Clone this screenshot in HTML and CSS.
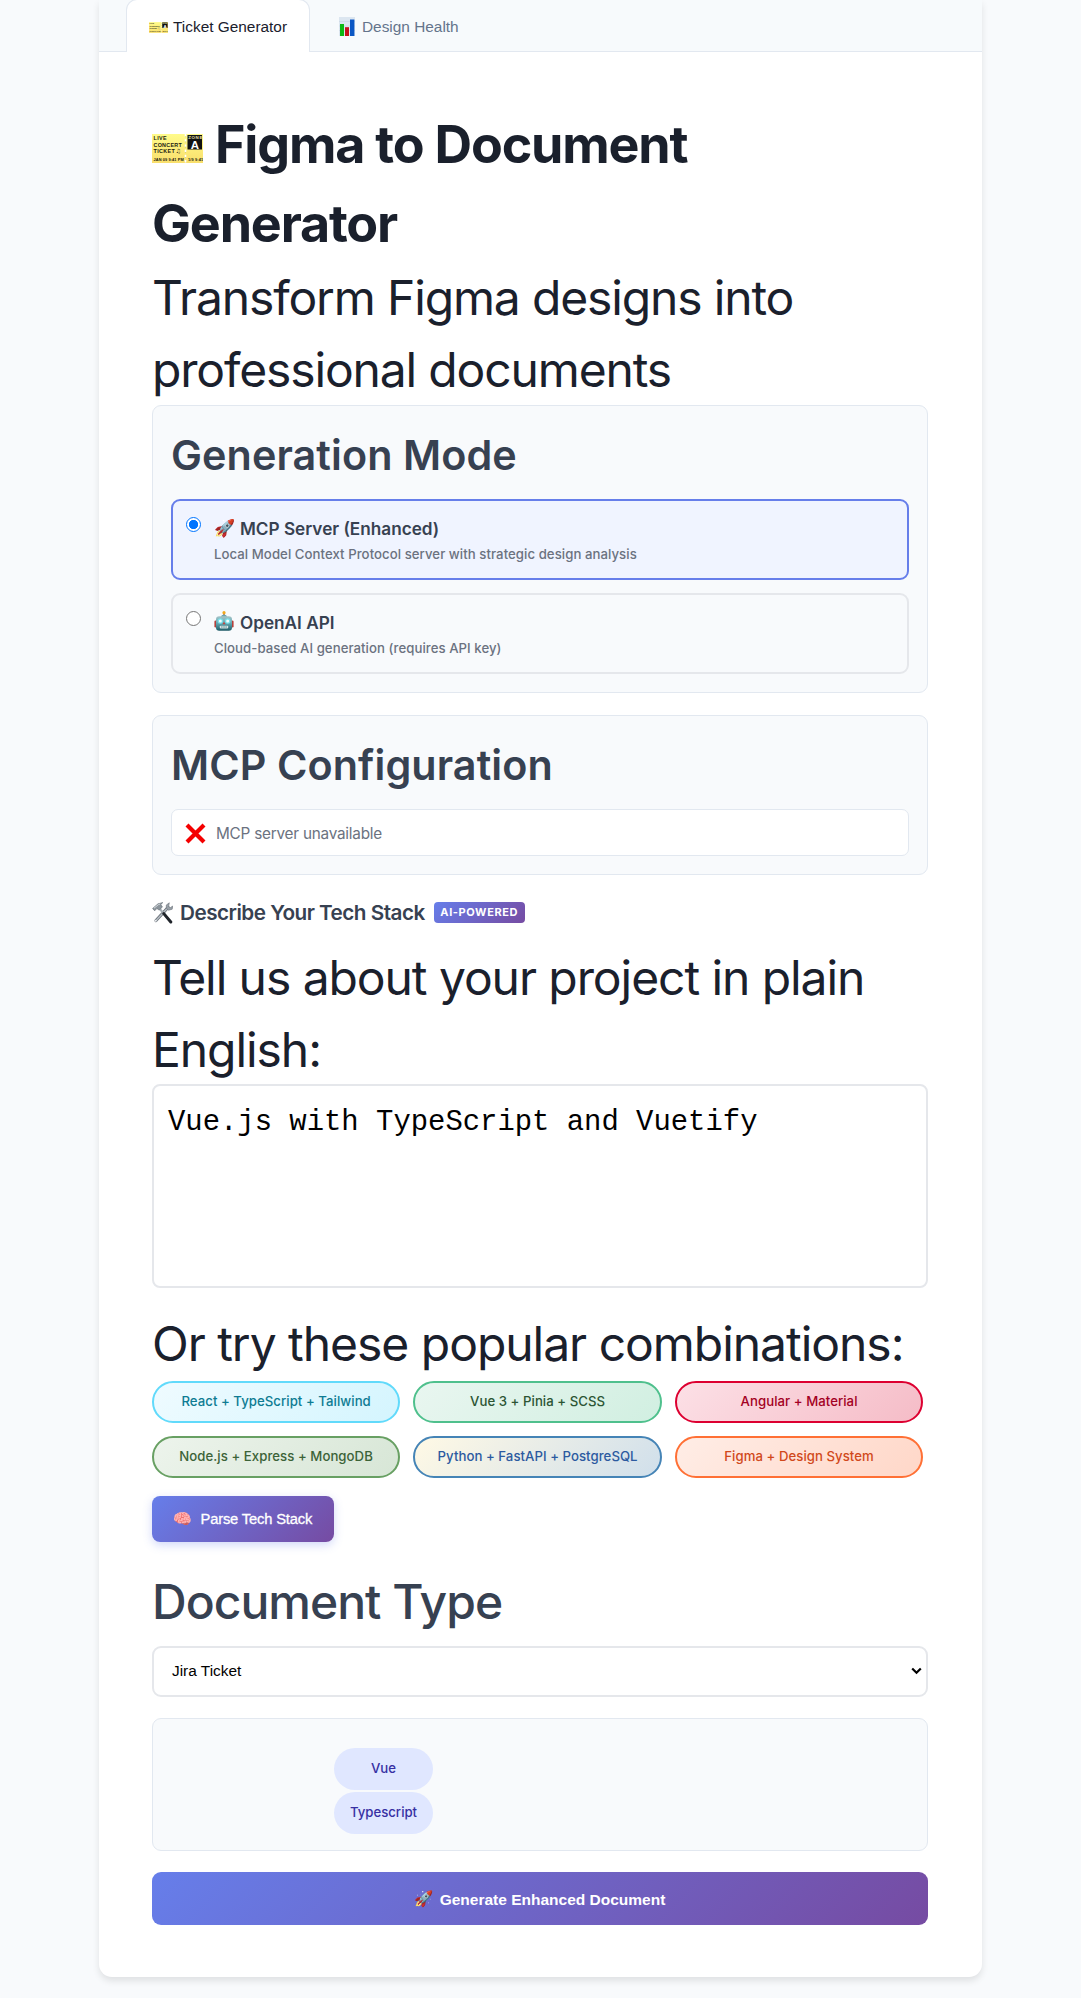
FILE: index.html
```html
<!DOCTYPE html>
<html lang="en">
<head>
<meta charset="utf-8">
<title>Figma to Document Generator</title>
<link rel="stylesheet" href="styles.css">
</head>
<body>
<svg class="defs" width="0" height="0" aria-hidden="true">
  <defs>
    <linearGradient id="paper" x1="0" y1="0" x2="0" y2="1"><stop offset="0" stop-color="#fffb8a"/><stop offset="1" stop-color="#f9df6c"/></linearGradient>
    <linearGradient id="face" x1="0" y1="0" x2="0" y2="1"><stop offset="0" stop-color="#a5c4c8"/><stop offset=".5" stop-color="#5fa6b0"/><stop offset="1" stop-color="#1d5965"/></linearGradient>
    <symbol id="ticket" viewBox="0 0 51 29">
      <rect width="51" height="29" fill="url(#paper)"/>
      <path d="M33.500 0v29" stroke="#fff" stroke-width="1.600" stroke-dasharray="2.400 2.800"/>
      <path d="M33.500 2.400v26" stroke="#b9b38a" stroke-width=".6" stroke-dasharray=".8 4.400"/>
      <rect x="35.500" y="1" width="14.500" height="14.500" fill="#111"/>
      <g font-family="Liberation Sans" font-weight="700" fill="#1b1a10">
        <text x="1.500" y="6" font-size="5.400" textLength="12">LIVE</text>
        <text x="1.500" y="12.600" font-size="5.400" textLength="27">CONCERT</text>
        <text x="1.500" y="19.400" font-size="5.400" textLength="20">TICKET</text>
        <text x="23.500" y="19.400" font-size="6" font-family="DejaVu Sans">♫</text>
        <text x="1.500" y="27" font-size="3.900" textLength="29">JAN 09  9:41 PM</text>
        <text x="36" y="27" font-size="3.900" textLength="14">1/9  9:41</text>
        <text x="36.200" y="5" font-size="4.400" textLength="13" fill="#e9e3b0">ZONE</text>
        <text x="38.800" y="14.600" font-size="11.500" fill="#fff">A</text>
      </g>
    </symbol>
    <symbol id="chart" viewBox="0 0 16 19">
      <rect width="16" height="19" fill="#dce6f0"/>
      <path d="M0 4.500h16M0 9h16M0 13.500h16" stroke="#c3d0de" stroke-width=".5"/>
      <rect x="1" y="7" width="4" height="12" fill="#0db814"/>
      <rect x="6" y="10.200" width="4" height="8.800" fill="#c8101c"/>
      <rect x="11" y="2.500" width="4.400" height="16.500" fill="#0b57c4"/>
    </symbol>
    <symbol id="robot" viewBox="0 0 20 20">
      <rect x=".4" y="9.500" width="2.600" height="7" rx="1.300" fill="#b5413b"/>
      <rect x="17" y="9.500" width="2.600" height="7" rx="1.300" fill="#b5413b"/>
      <path d="M10 2v4" stroke="#c14d32" stroke-width="1.400"/>
      <circle cx="10" cy="1.700" r="1.600" fill="#f1a91e"/>
      <path d="M6.800 6q.4-2.500 3.200-2.500T13.200 6z" fill="#6aa5ae"/>
      <rect x="2" y="5.300" width="16" height="14.500" rx="3.200" fill="url(#face)"/>
      <circle cx="6.300" cy="10" r="2.700" fill="#7be0ea"/><circle cx="13.700" cy="10" r="2.700" fill="#7be0ea"/>
      <circle cx="6.300" cy="10" r="1.500" fill="#f5ffff"/><circle cx="13.700" cy="10" r="1.500" fill="#f5ffff"/>
      <path d="M10 10.800l1.300 2.400H8.700z" fill="#d5382d"/>
      <rect x="5.800" y="14.800" width="8.400" height="2.600" rx=".8" fill="#dbe9e8"/>
      <path d="M7.900 14.800v2.600M10 14.800v2.600M12.100 14.800v2.600" stroke="#32707a" stroke-width=".6"/>
    </symbol>
    <symbol id="cross" viewBox="0 0 21 21">
      <path d="M2 2l17 17M19 2L2 19" stroke="#f40000" stroke-width="4.200"/>
    </symbol>
    <symbol id="tools" viewBox="0 0 21 22">
      <path d="M16 5.500L4 18.500" stroke="#6d747c" stroke-width="3.200" stroke-linecap="round"/>
      <path d="M16.300 5.200L4.300 18.200" stroke="#b7bec4" stroke-width="1.300" stroke-linecap="round"/>
      <path d="M17.300.8L14.300 3v3.300l2.300 1.900 3.600-1 .6-3.200-2.400 1.600-1.800-1z" fill="#98a0a7" stroke="#6d747c" stroke-width=".6"/>
      <circle cx="3.700" cy="18.700" r="1" fill="#e9ecee"/>
      <path d="M7.500 6.500l5 6" stroke="#a5adb3" stroke-width="2"/>
      <path d="M11.800 11.600l7 8.400" stroke="#20242a" stroke-width="3" stroke-linecap="round"/>
      <path d="M.6 6.500L6 1.800 10.800.6l-2 1.900 1.600 2.600-3.300 3-2.200-1.600L2.700 8.800z" fill="#8c959c" stroke="#626a72" stroke-width=".6"/>
      <path d="M2 6.200l4.300-3.500 2-.8" stroke="#d5dade" fill="none"/>
    </symbol>
  </defs>
</svg>

<div class="container">
  <nav class="tabs">
    <button class="tab tab-active"><svg class="tab-ticket"><use href="#ticket"/></svg>Ticket Generator</button>
    <button class="tab"><svg class="tab-chart"><use href="#chart"/></svg>Design Health</button>
  </nav>

  <main class="content">
    <h1 class="title"><svg class="title-ticket"><use href="#ticket"/></svg>Figma to Document<br>Generator</h1>
    <p class="lead">Transform Figma designs into<br>professional documents</p>

    <section class="card mode">
      <h2 class="card-title">Generation Mode</h2>
      <label class="option option-selected">
        <span class="radio radio-on"></span>
        <span class="option-body">
          <span class="option-title"><span class="emoji">🚀</span>MCP Server (Enhanced)</span>
          <span class="option-sub">Local Model Context Protocol server with strategic design analysis</span>
        </span>
      </label>
      <label class="option">
        <span class="radio"></span>
        <span class="option-body">
          <span class="option-title"><svg class="robot"><use href="#robot"/></svg>OpenAI API</span>
          <span class="option-sub">Cloud-based AI generation (requires API key)</span>
        </span>
      </label>
    </section>

    <section class="card config">
      <h2 class="card-title">MCP Configuration</h2>
      <div class="status"><svg class="cross"><use href="#cross"/></svg><span>MCP server unavailable</span></div>
    </section>

    <div class="stack-head">
      <svg class="tools"><use href="#tools"/></svg>
      <h3 class="stack-title">Describe Your Tech Stack</h3>
      <span class="badge">AI-POWERED</span>
    </div>
    <p class="lead prompt">Tell us about your project in plain<br>English:</p>
    <textarea class="stack-input" spellcheck="false">Vue.js with TypeScript and Vuetify</textarea>

    <p class="lead combos-label">Or try these popular combinations:</p>
    <div class="combos">
      <button class="combo react">React + TypeScript + Tailwind</button>
      <button class="combo vue">Vue 3 + Pinia + SCSS</button>
      <button class="combo angular">Angular + Material</button>
      <button class="combo node">Node.js + Express + MongoDB</button>
      <button class="combo python">Python + FastAPI + PostgreSQL</button>
      <button class="combo figma">Figma + Design System</button>
    </div>
    <button class="parse"><span class="emoji brain">🧠</span>Parse Tech Stack</button>

    <h2 class="doc-label">Document Type</h2>
    <div class="select"><span>Jira Ticket</span><svg class="caret" viewBox="0 0 11 8"><path d="M1.200 1.500l4.300 4.300 4.300-4.300" fill="none" stroke="#000" stroke-width="2.200"/></svg></div>

    <div class="card tags">
      <span class="tag">Vue</span>
      <span class="tag">Typescript</span>
    </div>

    <button class="generate"><span class="emoji launch">🚀</span>Generate Enhanced Document</button>
  </main>
</div>
</body>
</html>
```
FILE: styles.css
```css
* { box-sizing: border-box; }

body {
  margin: 0;
  background: #f8fafc;
  color: #1a202c;
  font-family: Inter, sans-serif;
  height: 1998px;
  overflow: hidden;
}

h1, h2, h3, p { margin: 0; white-space: nowrap; }
button { font-family: "Liberation Sans", Arial, sans-serif; border: 0; padding: 0; white-space: nowrap; }
svg { flex: none; }
.defs { position: absolute; }

.container {
  width: 882.5px;
  height: 1977px;
  margin-left: 99px;
  background: #fff;
  border-radius: 0 0 13px 13px;
  box-shadow: 0 4px 7px rgba(0, 0, 0, .1);
}

.tabs {
  display: flex;
  height: 52px;
  padding-left: 27px;
  background: #f7fafc;
  border-bottom: 1px solid #e2e8f0;
}
.tab {
  display: flex;
  align-items: center;
  height: 53px;
  margin-top: -1px;
  padding: 2px 22px 0;
  border: 1px solid transparent;
  background: transparent;
  color: #64748b;
  font-size: 15.4px;
}
.tab-active {
  width: 184px;
  margin-right: 6px;
  background: #fff;
  border-color: #e2e8f0;
  border-bottom: 0;
  border-radius: 11px 11px 0 0;
  color: #1a202c;
}
.tab-ticket { width: 19px; height: 11px; margin-right: 5px; }
.tab-chart { width: 16px; height: 19px; margin: -1px 7px 0 0; }

.content { display: flex; flex-direction: column; padding: 53px 53.5px 0 53px; }

.title { font-size: 52px; font-weight: 700; line-height: 79px; letter-spacing: -1.18px; }
.title-ticket { width: 51px; height: 29px; margin-right: 12px; }
.lead { font-size: 48px; line-height: 71.5px; letter-spacing: -1.15px; }
.title + .lead { margin-top: -1px; }

.card { border: 1px solid #e2e8f0; border-radius: 9px; background: #f8fafc; padding: 19px 18px 0; }
.card-title { font-size: 41.3px; font-weight: 600; line-height: 60px; color: #374151; letter-spacing: .1px; }

.mode { height: 288px; }
.option {
  display: flex;
  height: 81px;
  margin-top: 13px;
  padding: 14px 0 0 13px;
  border: 2px solid #e5e7eb;
  border-radius: 9px;
}
.option-selected { border-color: #667eea; background: #f0f4ff; margin-top: 14px; }
.radio { width: 15px; height: 15px; margin: 2px 13px 0 0; border: 1px solid #767676; border-radius: 50%; background: #fff; }
.radio-on { border: 1.5px solid #0075ff; background: radial-gradient(circle, #0075ff 0 4.3px, #fff 5px); }
.option-body { display: flex; flex-direction: column; }
.option-title { display: flex; align-items: center; height: 26px; font-size: 17.2px; font-weight: 600; color: #374151; white-space: nowrap; }
.option-sub { margin-top: 2.5px; font-size: 13.2px; font-weight: 500; line-height: 20px; letter-spacing: .05px; color: #6b7280; white-space: nowrap; }
.emoji { width: 26px; font-family: "Noto Color Emoji", sans-serif; font-size: 17px; font-weight: 400; line-height: 1; }
.robot { width: 20px; height: 20px; margin: -2px 6px 0 0; }

.config { height: 160px; margin-top: 22px; }
.status {
  display: flex;
  align-items: center;
  height: 47px;
  margin-top: 14px;
  padding: 1px 0 0 13px;
  border: 1px solid #e2e8f0;
  border-radius: 7px;
  background: #fff;
  color: #6b7280;
  font-size: 15.3px;
  letter-spacing: -.22px;
}
.cross { width: 21px; height: 21px; margin-right: 10px; }

.stack-head { display: flex; align-items: center; height: 31px; margin-top: 22px; }
.tools { width: 21px; height: 22px; margin-right: 7px; }
.stack-title { font-size: 20.7px; font-weight: 600; line-height: 31px; letter-spacing: -.51px; color: #374151; }
.badge {
  width: 91px;
  margin-left: 9px;
  border-radius: 4px;
  background: linear-gradient(135deg, #667eea, #764ba2);
  color: #fff;
  font-size: 11px;
  font-weight: 700;
  line-height: 21px;
  letter-spacing: .6px;
  text-align: center;
}
.prompt { margin-top: 14px; letter-spacing: -1.07px; }

.stack-input {
  width: 100%;
  height: 204px;
  margin-top: -1px;
  padding: 19px 14px;
  border: 2px solid #e5e7eb;
  border-radius: 8px;
  background: #fff;
  color: #000;
  font: 28.9px/36px "Courier New", "Liberation Mono", monospace;
  resize: none;
  overflow: hidden;
}
.combos-label { margin-top: 19.5px; letter-spacing: -1.03px; }

.combos { display: grid; grid-template-columns: repeat(3, 248.2px); gap: 13px 13.3px; margin-top: 2px; }
.combo {
  height: 42px;
  border: 2px solid;
  border-radius: 21px;
  font-family: Inter, sans-serif;
  font-size: 13.2px;
  font-weight: 500;
  letter-spacing: .04px;
  padding-bottom: 2px;
}
.react { border-color: #61dafb; background: linear-gradient(135deg, #effbff, #d4f5fe); color: #0e7c93; }
.vue { border-color: #4fc08d; background: linear-gradient(135deg, #e9f6f0, #d1efe1); color: #2c5534; }
.angular { border-color: #dd0031; background: linear-gradient(135deg, #fce0e6, #f5bcc7); color: #a30023; }
.node { border-color: #68a063; background: linear-gradient(135deg, #edf4ec, #d7e6d6); color: #3c6338; }
.python { border-color: #4584b6; background: linear-gradient(135deg, #fff9e5, #d0dfeb); color: #2c5aa0; }
.figma { border-color: #ff7035; background: linear-gradient(135deg, #ffede6, #ffd7c8); color: #d1491b; }

.parse {
  display: flex;
  align-items: center;
  width: 182px;
  height: 46px;
  margin-top: 18px;
  padding: 0 0 1px 21px;
  border-radius: 8px;
  background: linear-gradient(135deg, #667eea, #764ba2);
  box-shadow: 0 3px 10px rgba(102, 126, 234, .3);
  color: #fff;
  font-size: 14.7px;
  letter-spacing: -.15px;
  -webkit-text-stroke: .3px #fff;
}
.brain { width: 27.5px; margin-top: 2px; font-size: 15px; letter-spacing: 0; text-align: left; }

.doc-label { margin-top: 24px; font-size: 48px; font-weight: 500; line-height: 71.5px; letter-spacing: -.98px; color: #374151; }
.select {
  display: flex;
  align-items: center;
  justify-content: space-between;
  height: 51px;
  margin-top: 8px;
  padding: 0 4px 0 18px;
  border: 2px solid #e5e7eb;
  border-radius: 9px;
  color: #000;
  font: 15.4px "Liberation Sans", Arial, sans-serif;
}
.caret { width: 11px; height: 8px; }

.tags {
  display: flex;
  flex-direction: column;
  gap: 2px;
  height: 133px;
  margin-top: 21.5px;
  padding: 29px 0 0 181px;
}
.tag {
  width: 99px;
  height: 42px;
  border-radius: 21px;
  background: #e0e7ff;
  color: #3730a3;
  font-size: 13.2px;
  font-weight: 500;
  line-height: 41px;
  text-align: center;
}

.generate {
  display: flex;
  align-items: center;
  justify-content: center;
  height: 53px;
  margin-top: 21px;
  padding-top: 3px;
  border-radius: 9px;
  background: linear-gradient(135deg, #667eea, #764ba2);
  color: #fff;
  font-size: 15.5px;
  font-weight: 700;
}
.launch { width: 25px; font-size: 15.5px; text-align: left; }
```
